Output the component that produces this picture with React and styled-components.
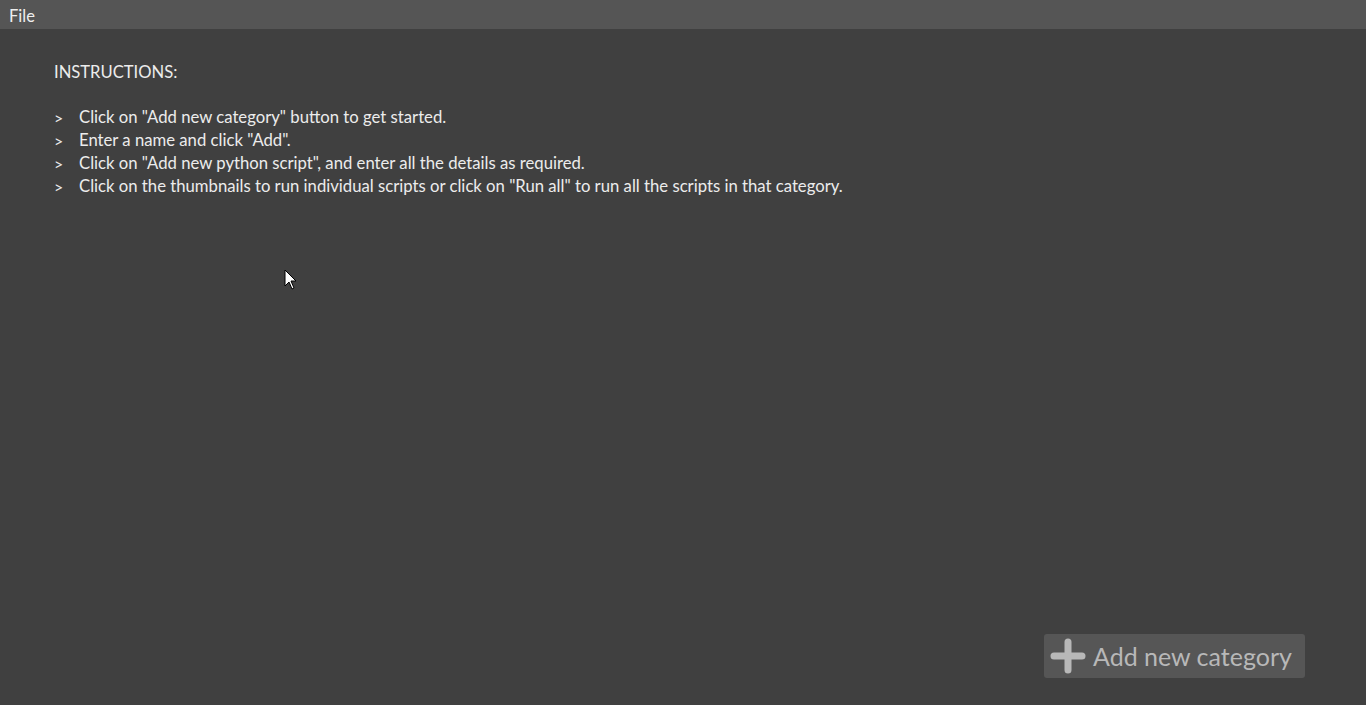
import React from "react";
import styled, { createGlobalStyle } from "styled-components";

const Global = createGlobalStyle`
  html, body { margin: 0; padding: 0; }
  body { background: #404040; font-family: Lato, "Noto Sans", sans-serif; }
  #root { height: 705px; }
`;

const Page = styled.div`
  height: 705px;
  display: flex;
  flex-direction: column;
  background: #404040;
  position: relative;
  overflow: hidden;
`;

const MenuBar = styled.div`
  height: 29px;
  flex: none;
  background: #555555;
  display: flex;
  align-items: center;
  padding-left: 9px;
  box-sizing: border-box;
  padding-top: 3px;
`;

const MenuItem = styled.span`
  color: #eeeeee;
  font-size: 16.5px;
  line-height: 26px;
`;

const Content = styled.div`
  flex: 1;
  display: flex;
  flex-direction: column;
  padding: 32px 60px 27px 54px;
`;

const Heading = styled.div`
  color: #ececec;
  font-size: 16.6px;
  line-height: 22px;
  margin-bottom: 23px;
`;

const List = styled.ul`
  list-style: none;
  margin: 0;
  padding: 0;
`;

const Item = styled.li`
  display: flex;
  color: #ececec;
  font-size: 16.7px;
  line-height: 23px;
`;

const Marker = styled.span`
  width: 25px;
  flex: none;
  font-size: 16px;
`;

const Spacer = styled.div`
  flex: 1;
`;

const Footer = styled.div`
  display: flex;
  justify-content: flex-end;
`;

const AddButton = styled.button`
  display: flex;
  align-items: center;
  gap: 7px;
  width: 261px;
  height: 44px;
  padding: 0 0 0 6px;
  margin-right: 1px;
  background: #565656;
  border: none;
  border-radius: 3px;
  color: #b8b8b8;
  font-family: Lato, "Noto Sans", sans-serif;
  font-size: 25px;
  cursor: pointer;
`;

const Cursor = styled.svg`
  position: absolute;
  left: 284px;
  top: 269px;
`;

export default function App() {
  const items = [
    'Click on "Add new category" button to get started.',
    'Enter a name and click "Add".',
    'Click on "Add new python script", and enter all the details as required.',
    'Click on the thumbnails to run individual scripts or click on "Run all" to run all the scripts in that category.',
  ];
  return (
    <Page>
      <Global />
      <MenuBar>
        <MenuItem>File</MenuItem>
      </MenuBar>
      <Content>
        <Heading>INSTRUCTIONS:</Heading>
        <List>
          {items.map((t) => (
            <Item key={t}>
              <Marker>&gt;</Marker>
              <span>{t}</span>
            </Item>
          ))}
        </List>
        <Spacer />
        <Footer>
          <AddButton>
            <svg width="36" height="36" viewBox="0 0 36 36">
              <path d="M18 4 V32 M4 18 H32" stroke="#b8b8b8" strokeWidth="7" strokeLinecap="round" fill="none" />
            </svg>
            <span>Add new category</span>
          </AddButton>
        </Footer>
      </Content>
      <Cursor width="14" height="22" viewBox="0 0 14 22">
        <path d="M1 1 V17 L5 13 L8 20 L10 19 L7 12 L12 12 Z" fill="#fff" stroke="#000" strokeWidth="1" />
      </Cursor>
    </Page>
  );
}
